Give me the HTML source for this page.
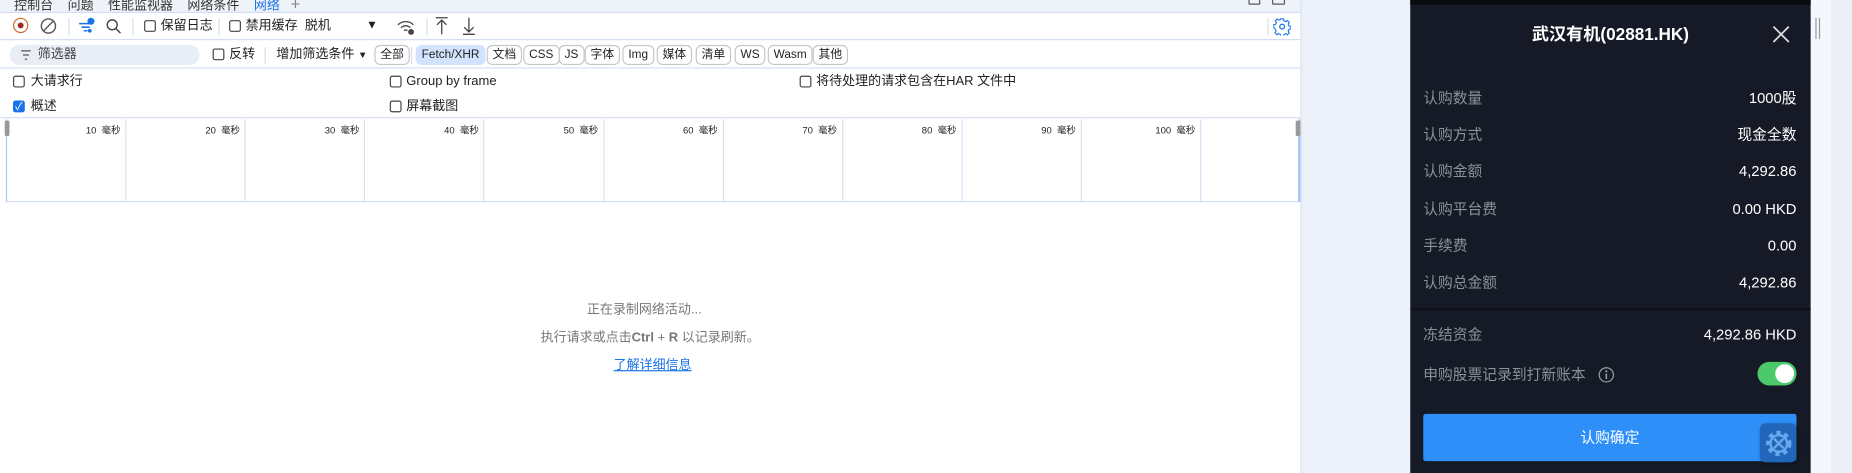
<!DOCTYPE html>
<html><head><meta charset="utf-8">
<style>
*{margin:0;padding:0;box-sizing:border-box}
html,body{width:1852px;height:473px;overflow:hidden;background:#fff}
#w{position:absolute;left:0;top:0;width:1568px;height:400px;transform:scale(1.18112,1.1825);transform-origin:0 0;font-family:"Liberation Sans","Noto Sans CJK SC",sans-serif;font-size:11px;color:#1f1f1f}
.a{position:absolute;white-space:nowrap;line-height:14px}
.cb{position:absolute;width:10px;height:10px;border:1px solid #444;border-radius:2px;background:#fff}
.btn{position:absolute;top:38px;height:17px;border:1px solid #c4c7cc;border-radius:5px;font-size:10px;line-height:15px;padding:0 4px;background:#fff}
.vl{position:absolute;width:1px;background:#d6dfef}
.row{position:absolute;left:1205px;width:316px;display:flex;justify-content:space-between;align-items:baseline;font-size:12.5px;line-height:16px}
.row span:first-child{color:#8b909a}
.row span:last-child{color:#fff}
</style></head><body><div id="w">
<div class="a" style="left:0;top:0;width:1101px;height:11px;background:#eef2f9;border-bottom:1px solid #d3def2"></div>
<div class="a" style="left:12px;top:-4px;font-size:11px;color:#333">控制台 &nbsp;&nbsp; 问题 &nbsp;&nbsp; 性能监视器 &nbsp;&nbsp; 网络条件 &nbsp;&nbsp; <span style="color:#1a73e8">网络</span> &nbsp; <span style="color:#888;font-size:14px">+</span></div>
<div class="a" style="left:1057px;top:-5px;width:10px;height:9px;border:1px solid #555;border-radius:1px"></div>
<div class="a" style="left:1077px;top:-5px;width:11px;height:9px;border:1px solid #555;border-radius:1px"></div>
<div class="a" style="left:0;top:11px;width:1101px;height:23px;background:#fff;border-bottom:1px solid #d3def2"></div>
<div class="a" style="left:11px;top:15px;width:13px;height:13px;border:1.5px solid #d06a30;border-radius:50%"></div>
<div class="a" style="left:15px;top:19px;width:5px;height:5px;background:#a12a1d;border-radius:50%"></div>
<svg class="a" style="left:34px;top:15px" width="14" height="14"><circle cx="7" cy="7" r="6" fill="none" stroke="#555" stroke-width="1.2"/><line x1="3" y1="11" x2="11" y2="3" stroke="#555" stroke-width="1.2"/></svg>
<div class="vl" style="left:58px;top:15px;height:15px"></div>
<svg class="a" style="left:66px;top:14px" width="16" height="16"><path d="M1 6h9M3 9h7M5 12h3" stroke="#1a73e8" stroke-width="1.3"/><circle cx="11" cy="4" r="3" fill="#1a73e8"/><circle cx="10" cy="12" r="1.6" fill="#1a73e8"/></svg>
<svg class="a" style="left:89px;top:15px" width="14" height="14"><circle cx="6" cy="6" r="4.2" fill="none" stroke="#444" stroke-width="1.2"/><line x1="9" y1="9" x2="13" y2="13" stroke="#444" stroke-width="1.3"/></svg>
<div class="vl" style="left:112px;top:15px;height:15px"></div>
<div class="cb" style="left:122px;top:17px"></div><div class="a" style="left:136px;top:15px">保留日志</div>
<div class="vl" style="left:185px;top:15px;height:15px"></div>
<div class="cb" style="left:194px;top:17px"></div><div class="a" style="left:208px;top:15px">禁用缓存 &nbsp;脱机</div>
<div class="a" style="left:310px;top:15px;font-size:10px">▼</div>
<svg class="a" style="left:336px;top:15px" width="16" height="15"><path d="M1 6a9 9 0 0 1 13 0M3.5 8.5a5.5 5.5 0 0 1 8 0M6 11a2 2 0 0 1 3 0" stroke="#555" stroke-width="1.2" fill="none"/><circle cx="12" cy="12" r="2.5" fill="#444"/></svg>
<div class="vl" style="left:361px;top:15px;height:15px"></div>
<svg class="a" style="left:368px;top:14px" width="12" height="16"><path d="M1 1h10M6 3v12M2 7l4-4 4 4" stroke="#444" stroke-width="1.1" fill="none"/></svg>
<svg class="a" style="left:391px;top:14px" width="12" height="16"><path d="M1 15h10M6 1v12M2 9l4 4 4-4" stroke="#444" stroke-width="1.1" fill="none"/></svg>
<div class="vl" style="left:1073px;top:15px;height:15px"></div>
<svg class="a" style="left:1078px;top:15px" width="15" height="15"><circle cx="7.5" cy="7.5" r="2" fill="none" stroke="#1a73e8" stroke-width="1.1"/><path d="M6.3 1h2.4l.4 1.8 1.5.7 1.6-1 1.7 1.7-1 1.6.7 1.5 1.8.4v2.4l-1.8.4-.7 1.5 1 1.6-1.7 1.7-1.6-1-1.5.7-.4 1.8H6.3l-.4-1.8-1.5-.7-1.6 1-1.7-1.7 1-1.6-.7-1.5L-.2 8.7V6.3l1.8-.4.7-1.5-1-1.6 1.7-1.7 1.6 1 1.5-.7z" transform="translate(.5 0) scale(.94)" fill="none" stroke="#1a73e8" stroke-width="1"/></svg>
<div class="a" style="left:0;top:35px;width:1101px;height:23px;background:#fff;border-bottom:1px solid #d3def2"></div>
<div class="a" style="left:8px;top:38px;width:161px;height:17px;background:#e9eef6;border-radius:9px"></div>
<svg class="a" style="left:17px;top:42px" width="10" height="9"><path d="M1 1h8M2.5 4.5h5M4 8h2" stroke="#555" stroke-width="1.1"/></svg>
<div class="a" style="left:32px;top:39px;color:#444">筛选器</div>
<div class="cb" style="left:180px;top:41px"></div><div class="a" style="left:194px;top:39px">反转</div>
<div class="vl" style="left:224px;top:40px;height:14px"></div>
<div class="a" style="left:234px;top:39px">增加筛选条件 <span style="font-size:8px">▼</span></div>
<div class="btn" style="left:317px">全部</div>
<div class="vl" style="left:348px;top:40px;height:14px"></div>
<div class="btn" style="left:352px;background:#d3e3fd;border-color:#d3e3fd">Fetch/XHR</div>
<div class="btn" style="left:412px">文档</div>
<div class="btn" style="left:443px">CSS</div>
<div class="btn" style="left:473px">JS</div>
<div class="btn" style="left:495px">字体</div>
<div class="btn" style="left:527px">Img</div>
<div class="btn" style="left:556px">媒体</div>
<div class="btn" style="left:589px">清单</div>
<div class="btn" style="left:622px">WS</div>
<div class="btn" style="left:650px">Wasm</div>
<div class="btn" style="left:688px">其他</div>
<div class="a" style="left:0;top:58px;width:1101px;height:42px;background:#fff;border-bottom:1px solid #d3def2"></div>
<div class="cb" style="left:11px;top:64px"></div><div class="a" style="left:26px;top:62px">大请求行</div>
<div class="a" style="left:11px;top:85px;width:10px;height:10px;background:#1a73e8;border-radius:2px;color:#fff;font-size:9px;line-height:10px;text-align:center">✓</div><div class="a" style="left:26px;top:83px">概述</div>
<div class="cb" style="left:330px;top:64px"></div><div class="a" style="left:344px;top:62px">Group by frame</div>
<div class="cb" style="left:330px;top:85px"></div><div class="a" style="left:344px;top:83px">屏幕截图</div>
<div class="cb" style="left:677px;top:64px"></div><div class="a" style="left:691px;top:62px">将待处理的请求包含在HAR 文件中</div>
<div class="a" style="left:5px;top:101px;width:1096px;height:70px;border-bottom:1px solid #d3def2;border-left:1px solid #a9c4f5;border-right:2px solid #a9c4f5"></div>
<div class="a" style="left:4px;top:102px;width:4px;height:13px;background:#999;border-radius:1px"></div>
<div class="a" style="left:1097px;top:102px;width:4px;height:13px;background:#999;border-radius:1px"></div>
<div id="grid"></div>
<div class="a" style="left:0;top:255px;width:1101px;text-align:center;color:#777;font-size:11px;padding-right:10px">正在录制网络活动...</div>
<div class="a" style="left:0;top:279px;width:1101px;text-align:center;color:#777;font-size:11px;padding-right:0">执行请求或点击<b>Ctrl</b> + <b>R</b> 以记录刷新。</div>
<div class="a" style="left:0;top:302px;width:1101px;text-align:center;color:#1a73e8;font-size:11px;text-decoration:underline;padding-left:4px">了解详细信息</div>
<div class="a" style="left:1101px;top:0;width:1px;height:400px;background:#d3def2"></div>
<div class="a" style="left:1102px;top:0;width:92px;height:400px;background:#ecf0f9"></div>
<div class="a" style="left:1533px;top:0;width:17px;height:400px;background:#f4f7fc"></div>
<div class="a" style="left:1550px;top:0;width:18px;height:400px;background:#ebeff8"></div>
<div class="a" style="left:1537px;top:15px;width:1px;height:18px;background:#999"></div>
<div class="a" style="left:1540px;top:15px;width:1px;height:18px;background:#999"></div>
<div class="a" style="left:1194px;top:0;width:339px;height:400px;background:#151a26"></div>
<div class="a" style="left:1194px;top:0;width:339px;height:4px;background:#090b10"></div>
<div class="a" style="left:1194px;top:21px;width:339px;text-align:center;color:#fff;font-weight:bold;font-size:14.5px;line-height:18px">武汉有机(02881.HK)</div>
<svg class="a" style="left:1500px;top:21px" width="16" height="16"><path d="M1.5 1.5l13 13M14.5 1.5l-13 13" stroke="#ddd" stroke-width="1.5"/></svg>
<div class="row" style="top:75px"><span>认购数量</span><span>1000股</span></div>
<div class="row" style="top:106px"><span>认购方式</span><span>现金全数</span></div>
<div class="row" style="top:137px"><span>认购金额</span><span>4,292.86</span></div>
<div class="row" style="top:169px"><span>认购平台费</span><span>0.00 HKD</span></div>
<div class="row" style="top:200px"><span>手续费</span><span>0.00</span></div>
<div class="row" style="top:231px"><span>认购总金额</span><span>4,292.86</span></div>
<div class="a" style="left:1194px;top:261px;width:339px;height:1px;background:#0a0d14"></div>
<div class="row" style="top:275px"><span>冻结资金</span><span>4,292.86 HKD</span></div>
<div class="row" style="top:309px"><span>申购股票记录到打新账本</span><span></span></div>
<svg class="a" style="left:1353px;top:310px" width="14" height="14"><circle cx="7" cy="7" r="6" fill="none" stroke="#9aa0aa" stroke-width="1"/><path d="M7 6v4.5" stroke="#9aa0aa" stroke-width="1.3"/><circle cx="7" cy="4" r=".9" fill="#9aa0aa"/></svg>
<div class="a" style="left:1488px;top:306px;width:33px;height:20px;background:#4cca6b;border-radius:10px"></div>
<div class="a" style="left:1503px;top:308px;width:16px;height:16px;background:#fff;border-radius:50%"></div>
<div class="a" style="left:1205px;top:350px;width:316px;height:40px;background:#2e8ff8;border-radius:2px;color:#fff;text-align:center;line-height:40px;font-size:12.5px">认购确定</div>
<div class="a" style="left:1490px;top:358px;width:31px;height:33px;background:#2166b9;border-radius:5px;box-shadow:1px 1px 3px #0006"></div>
<svg class="a" style="left:1493px;top:362px" width="26" height="26"><circle cx="13" cy="13" r="9" fill="none" stroke="#6aa8ee" stroke-width="3.5" stroke-dasharray="3.5 3.2"/><circle cx="13" cy="13" r="7" fill="none" stroke="#6aa8ee" stroke-width="2"/><path d="M9 9l8 8M17 9l-8 8" stroke="#6aa8ee" stroke-width="2"/></svg>
<script>
var g=document.getElementById('grid'),h='';
for(var i=1;i<=11;i++){var x=5+i*101.1;
h+='<div class="a" style="left:'+(x-100)+'px;top:104px;width:96px;text-align:right;font-size:8px;color:#222">'+(i*10)+(i<11?' &nbsp;毫秒':'')+'</div>';
if(i<11)h+='<div class="vl" style="left:'+x+'px;top:101px;height:70px;background:#d6e2f5"></div>';}
g.innerHTML=h;
</script>
</div></body></html>
